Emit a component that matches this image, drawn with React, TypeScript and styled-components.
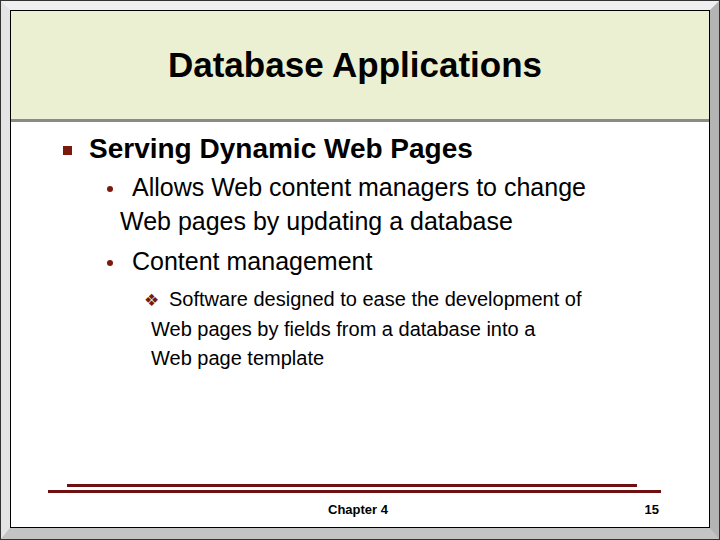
import styled, { createGlobalStyle } from 'styled-components'

const Global = createGlobalStyle`
  html, body { margin: 0; padding: 0; background: #fff; }
  body { font-family: "Liberation Sans", Arial, sans-serif; }
`

const Frame = styled.div`
  width: 720px;
  height: 540px;
  box-sizing: border-box;
  background: #c8c8c8;
  border-top: 10px solid #f0f0f0;
  border-left: 10px solid #e4e4e4;
  border-right: 10px solid #b4b4b4;
  border-bottom: 12px solid #c4c4c4;
  outline: 1px solid #333;
  outline-offset: -1px;
  display: flex;
`

const Slide = styled.div`
  flex: 1;
  background: #fff;
  border: 1px solid #000;
  display: flex;
  flex-direction: column;
`

const TitleBand = styled.div`
  height: 108px;
  background: #ebf0d2;
  border-bottom: 3px solid #8a8a8a;
  display: flex;
  align-items: center;
  justify-content: center;
`

const Title = styled.h1`
  margin: 0;
  font-size: 35px;
  font-weight: bold;
  color: #000;
  padding-right: 10px;
`

const Body = styled.div`
  flex: 1;
  padding: 10px 0 0 0;
`

const Item = styled.div<{ $indent: number; $size: number; $line: number; $gap: number; $mark: number }>`
  margin-left: ${(p) => p.$indent}px;
  margin-top: ${(p) => p.$gap}px;
  padding-left: ${(p) => p.$mark}px;
  font-size: ${(p) => p.$size}px;
  line-height: ${(p) => p.$line}px;
  color: #000;
  white-space: nowrap;
`

const Mark = styled.span<{ $shift: number; $width: number }>`
  display: inline-block;
  margin-left: ${(p) => p.$shift}px;
  width: ${(p) => p.$width}px;
  vertical-align: top;
`

const Square = styled.span`
  display: inline-block;
  width: 9px;
  height: 9px;
  background: #7a1a0a;
  vertical-align: middle;
`

const Dot = styled.span`
  display: inline-block;
  width: 6px;
  height: 6px;
  border-radius: 50%;
  background: #7a1a0a;
  vertical-align: middle;
`

const Diamond = styled.span`
  color: #7a1a0a;
  font-family: "DejaVu Sans", sans-serif;
  font-size: 17px;
`

const Footer = styled.div`
  padding: 0 48px 10px 37px;
  display: flex;
  flex-direction: column;
`

const RuleTop = styled.div`
  height: 3px;
  background: #6e1010;
  margin: 0 24px 0 19px;
`

const RuleBottom = styled.div`
  height: 3px;
  background: #6e1010;
  margin-top: 3px;
`

const FootRow = styled.div`
  display: flex;
  justify-content: space-between;
  margin-top: 9px;
  font-size: 13px;
  font-weight: bold;
  padding-left: 280px;
  padding-right: 2px;
`

export default function App() {
  return (
    <>
      <Global />
      <Frame>
        <Slide>
          <TitleBand>
            <Title>Database Applications</Title>
          </TitleBand>
          <Body>
            <Item $indent={52} $size={28} $line={34} $gap={0} $mark={26} style={{ fontWeight: 'bold' }}>
              <Mark $shift={-26} $width={26}><Square /></Mark>
              Serving Dynamic Web Pages
            </Item>
            <Item $indent={97} $size={25} $line={34} $gap={4} $mark={12}>
              <Mark $shift={-13} $width={25}><Dot /></Mark>
              Allows Web content managers to change
              <br />
              Web pages by updating a database
            </Item>
            <Item $indent={97} $size={25} $line={34} $gap={6} $mark={12}>
              <Mark $shift={-13} $width={25}><Dot /></Mark>
              Content management
            </Item>
            <Item $indent={129} $size={20} $line={29} $gap={7} $mark={11}>
              <Mark $shift={-7} $width={25}><Diamond>❖</Diamond></Mark>
              Software designed to ease the development of
              <br />
              Web pages by fields from a database into a
              <br />
              Web page template
            </Item>
          </Body>
          <Footer>
            <RuleTop />
            <RuleBottom />
            <FootRow>
              <span>Chapter 4</span>
              <span>15</span>
            </FootRow>
          </Footer>
        </Slide>
      </Frame>
    </>
  )
}
